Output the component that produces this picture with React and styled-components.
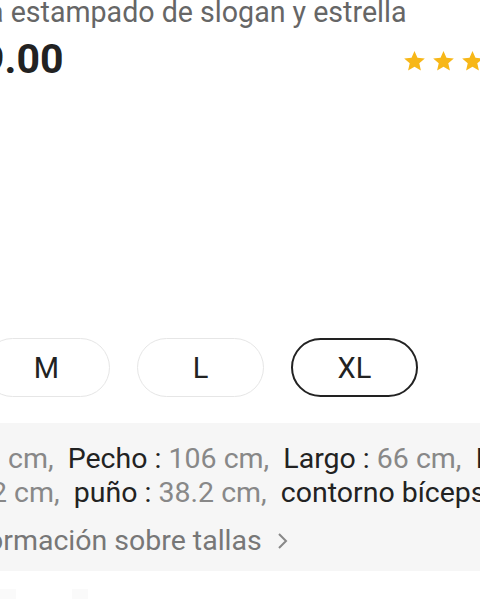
import React from 'react';
import styled, { createGlobalStyle } from 'styled-components';

const Global = createGlobalStyle`
  html, body { margin: 0; padding: 0; background: #fff; }
  body { font-family: Roboto, "Noto Sans", Arial, sans-serif; }
`;

const Page = styled.div`
  width: 480px;
  height: 599px;
  overflow: hidden;
  background: #fff;
  display: flex;
  flex-direction: column;
`;

const Title = styled.div`
  margin: -4px 0 0 -12px;
  font-size: 28.6px;
  line-height: 32px;
  color: #666;
  white-space: nowrap;
`;

const PriceRow = styled.div`
  display: flex;
  align-items: center;
  justify-content: space-between;
  margin: 8px -33px 0 -19px;
`;

const Price = styled.div`
  font-size: 41px;
  font-weight: 700;
  color: #222;
  line-height: 46px;
`;

const Stars = styled.div`
  display: flex;
  gap: 6px;
  margin-top: 4px;
`;

const Star = () => (
  <svg width="23" height="22" viewBox="0 0 24 23">
    <path
      d="M12 1l3.1 7.1 7.7.7-5.8 5.1 1.7 7.6L12 17.5l-6.7 4 1.7-7.6L1.2 8.8l7.7-.7z"
      fill="#f7b718"
    />
  </svg>
);

const SizeRow = styled.div`
  display: flex;
  gap: 27px;
  margin: 256px 0 0 -17px;
`;

const SizePill = styled.div`
  flex: none;
  box-sizing: border-box;
  width: 127px;
  height: 59px;
  border-radius: 30px;
  border: ${p => (p.$active ? '2px solid #222' : '1.5px solid #e6e6e6')};
  display: flex;
  align-items: center;
  justify-content: center;
  font-size: 29px;
  color: #222;
`;

const SpecBox = styled.div`
  margin-top: 26px;
  background: #f6f6f6;
  height: 152px;
  box-sizing: border-box;
  padding-top: 19px;
`;

const SpecLine = styled.div`
  white-space: pre;
  font-size: 28.5px;
  line-height: 34px;
  color: #888;
  margin-left: ${p => p.$shift}px;
`;

const Label = styled.span`
  color: #222;
`;

const MoreLink = styled.div`
  display: flex;
  align-items: center;
  gap: 15px;
  white-space: pre;
  font-size: 28.5px;
  line-height: 34px;
  color: #777;
  margin: 14px 0 0 -13px;
`;

const Footer = styled.div`
  display: flex;
  gap: 56px;
  margin: 18px 0 0 0;
`;

const Ghost = styled.div`
  width: ${p => p.$w}px;
  height: 10px;
  background: #fafafa;
`;

export default function App() {
  return (
    <Page>
      <Global />
      <Title>a estampado de slogan y estrella</Title>
      <PriceRow>
        <Price>9.00</Price>
        <Stars>
          <Star />
          <Star />
          <Star />
          <Star />
        </Stars>
      </PriceRow>
      <SizeRow>
        <SizePill>M</SizePill>
        <SizePill>L</SizePill>
        <SizePill $active>XL</SizePill>
      </SizeRow>
      <SpecBox>
        <SpecLine $shift={8}>
          {'cm,  '}<Label>Pecho :</Label>{' 106 cm,  '}<Label>Largo :</Label>{' 66 cm,  '}<Label>H</Label>
        </SpecLine>
        <SpecLine $shift={-9}>
          {'2 cm,  '}<Label>puño :</Label>{' 38.2 cm,  '}<Label>contorno bíceps</Label>
        </SpecLine>
        <MoreLink>
          ormación sobre tallas
          <svg width="12" height="18" viewBox="0 0 12 18">
            <path d="M2 2l7 7-7 7" fill="none" stroke="#888" strokeWidth="2" />
          </svg>
        </MoreLink>
      </SpecBox>
      <Footer>
        <Ghost $w={16} />
        <Ghost $w={16} />
      </Footer>
    </Page>
  );
}
